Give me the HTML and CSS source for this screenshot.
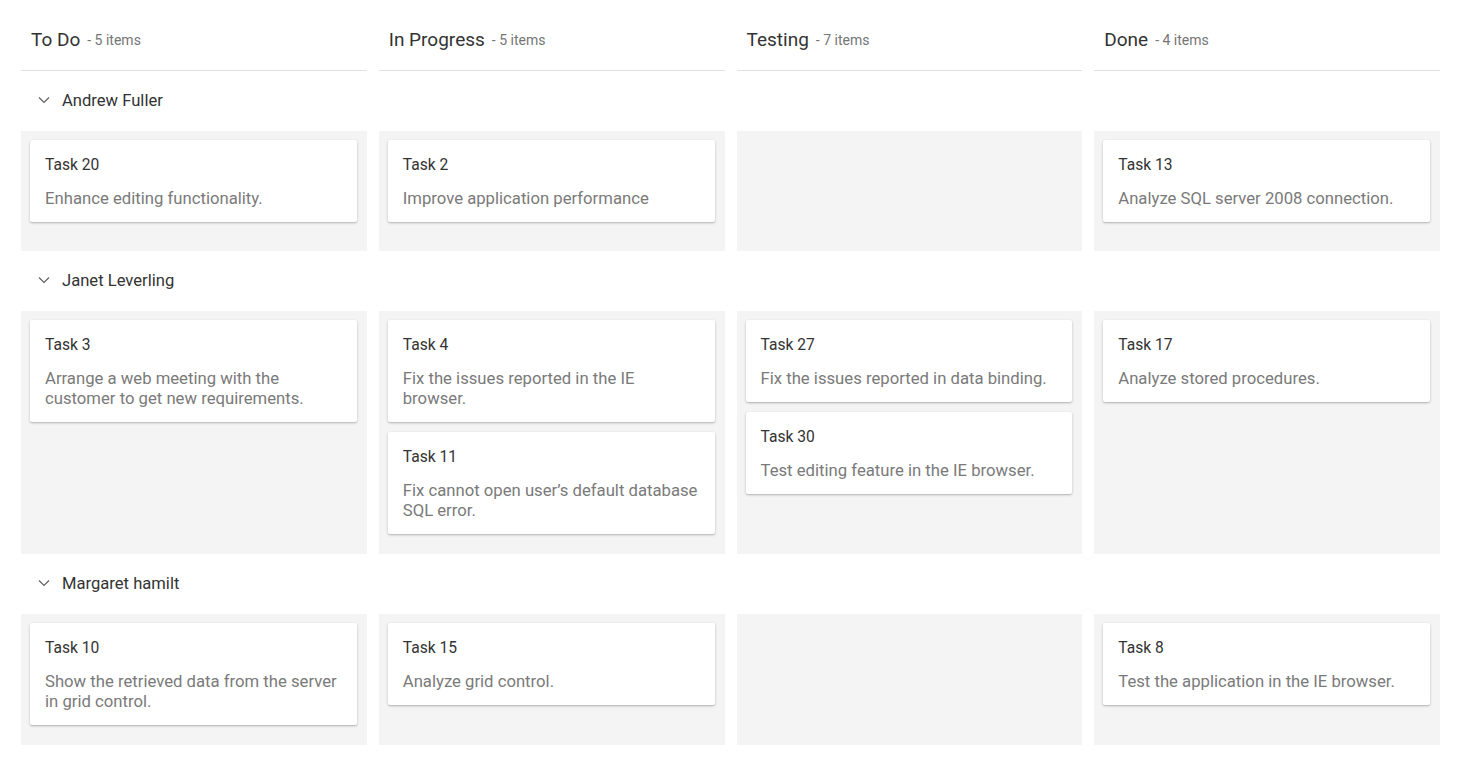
FILE: index.html
```html
<!DOCTYPE html>
<html lang="en">
<head>
    <meta charset="UTF-8">
    <title>Kanban - Swimlanes</title>
    <link rel="stylesheet" href="styles.css">
</head>
<body>
    <div class="kanban">
        <div class="header-row">
            <div class="column-header"><span class="column-title">To Do</span><span class="column-count">- 5 items</span></div>
            <div class="column-header"><span class="column-title">In Progress</span><span class="column-count">- 5 items</span></div>
            <div class="column-header"><span class="column-title">Testing</span><span class="column-count">- 7 items</span></div>
            <div class="column-header"><span class="column-title">Done</span><span class="column-count">- 4 items</span></div>
        </div>

        <!-- Andrew Fuller -->
        <div class="swimlane-header">
            <svg class="chevron" width="12" height="8" viewBox="0 0 12 8"><path d="M1 1.5 L6 6.5 L11 1.5" fill="none" stroke="#616161" stroke-width="1.2"/></svg>
            <span class="swimlane-name">Andrew Fuller</span>
        </div>
        <div class="swimlane-row">
            <div class="cell">
                <div class="card">
                    <div class="card-title">Task 20</div>
                    <div class="card-text">Enhance editing functionality.</div>
                </div>
            </div>
            <div class="cell">
                <div class="card">
                    <div class="card-title">Task 2</div>
                    <div class="card-text">Improve application performance</div>
                </div>
            </div>
            <div class="cell"></div>
            <div class="cell">
                <div class="card">
                    <div class="card-title">Task 13</div>
                    <div class="card-text">Analyze SQL server 2008 connection.</div>
                </div>
            </div>
        </div>

        <!-- Janet Leverling -->
        <div class="swimlane-header">
            <svg class="chevron" width="12" height="8" viewBox="0 0 12 8"><path d="M1 1.5 L6 6.5 L11 1.5" fill="none" stroke="#616161" stroke-width="1.2"/></svg>
            <span class="swimlane-name">Janet Leverling</span>
        </div>
        <div class="swimlane-row">
            <div class="cell">
                <div class="card">
                    <div class="card-title">Task 3</div>
                    <div class="card-text">Arrange a web meeting with the customer to get new requirements.</div>
                </div>
            </div>
            <div class="cell">
                <div class="card">
                    <div class="card-title">Task 4</div>
                    <div class="card-text">Fix the issues reported in the IE browser.</div>
                </div>
                <div class="card">
                    <div class="card-title">Task 11</div>
                    <div class="card-text">Fix cannot open user’s default database SQL error.</div>
                </div>
            </div>
            <div class="cell">
                <div class="card">
                    <div class="card-title">Task 27</div>
                    <div class="card-text">Fix the issues reported in data binding.</div>
                </div>
                <div class="card">
                    <div class="card-title">Task 30</div>
                    <div class="card-text">Test editing feature in the IE browser.</div>
                </div>
            </div>
            <div class="cell">
                <div class="card">
                    <div class="card-title">Task 17</div>
                    <div class="card-text">Analyze stored procedures.</div>
                </div>
            </div>
        </div>

        <!-- Margaret hamilt -->
        <div class="swimlane-header">
            <svg class="chevron" width="12" height="8" viewBox="0 0 12 8"><path d="M1 1.5 L6 6.5 L11 1.5" fill="none" stroke="#616161" stroke-width="1.2"/></svg>
            <span class="swimlane-name">Margaret hamilt</span>
        </div>
        <div class="swimlane-row">
            <div class="cell">
                <div class="card">
                    <div class="card-title">Task 10</div>
                    <div class="card-text">Show the retrieved data from the server in grid control.</div>
                </div>
            </div>
            <div class="cell">
                <div class="card">
                    <div class="card-title">Task 15</div>
                    <div class="card-text">Analyze grid control.</div>
                </div>
            </div>
            <div class="cell"></div>
            <div class="cell">
                <div class="card">
                    <div class="card-title">Task 8</div>
                    <div class="card-text">Test the application in the IE browser.</div>
                </div>
            </div>
        </div>
    </div>
</body>
</html>
```

FILE: styles.css
```css
body {
    font-family: Roboto, "Noto Sans", sans-serif;
    margin: 0;
    padding: 0 22px 0 21px;
    background-color: #fff;
    color: #333;
}
.kanban {
    display: flex;
    flex-direction: column;
}
.header-row,
.swimlane-row {
    display: grid;
    grid-template-columns: repeat(4, 1fr);
    column-gap: 12px;
}
.column-header {
    height: 71px;
    box-sizing: border-box;
    border-bottom: 1px solid #e0e0e0;
    padding: 8px 10px 0;
    display: flex;
    align-items: center;
}
.column-title {
    font-size: 19px;
    color: #333;
    margin-right: 7px;
}
.column-count {
    font-size: 14px;
    color: #757575;
    padding-top: 1px;
}
.swimlane-header {
    height: 60px;
    box-sizing: border-box;
    display: flex;
    align-items: center;
    padding: 0 0 2px 17px;
}
.chevron {
    margin-right: 12px;
}
.swimlane-name {
    font-size: 16.6px;
    color: #333;
}
.cell {
    background-color: #f4f4f4;
    padding: 9px 10px 20px 9px;
    min-height: 120px;
    box-sizing: border-box;
    display: flex;
    flex-direction: column;
    gap: 10px;
}
.card {
    background-color: #fff;
    border-radius: 2px;
    box-shadow: 0 1px 3px rgba(0,0,0,0.2), 0 1px 1px rgba(0,0,0,0.1);
    padding: 15px 15px 13px;
}
.card-title {
    font-size: 15.6px;
    line-height: 20px;
    color: #333;
    margin-bottom: 14px;
}
.card-text {
    font-size: 16.7px;
    line-height: 20px;
    color: #7a7a7a;
}
```
